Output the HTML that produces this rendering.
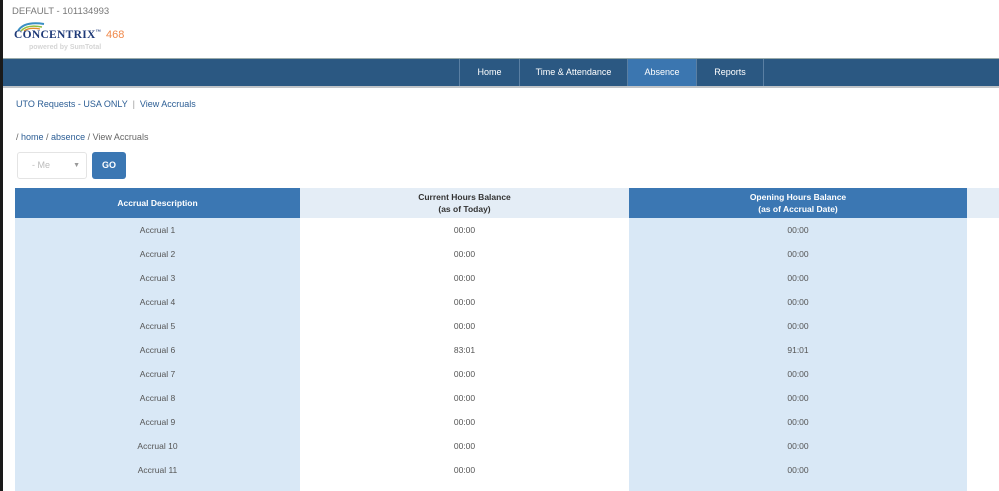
<!DOCTYPE html>
<html style="width:999px;height:491px;overflow:hidden"><head><meta charset="utf-8"><style>
*{margin:0;padding:0;box-sizing:border-box}
body{width:999px;height:491px;overflow:hidden;background:#fff;font-family:"Liberation Sans",sans-serif;position:relative;color:#555}
.strip{position:absolute;left:0;top:0;width:3px;height:491px;background:#1a1a1a}
.abs{position:absolute}
.nav{left:3px;top:58px;width:996px;height:30px;background:#2b5882;border-top:1px solid #9aa;border-bottom:2px solid #c0c4c8}
.ni{position:absolute;top:0;height:27px;line-height:27px;color:#fff;font-size:9px;text-align:center;border-left:1px solid #5a7fa3}
table{position:absolute;left:15px;top:188px;border-collapse:collapse;font-size:8.5px}
td,th{text-align:center;height:24px;color:#555;font-weight:normal}
th{height:30px;font-weight:bold;color:#333;line-height:12px}
.c1{width:285px;background:#d9e8f6}
.c2{width:329px;background:#fff}
.c3{width:338px;background:#d9e8f6}
.c4{width:32px;background:#fff}
th.c1,th.c3{background:#3b77b3;color:#fff}
th.c2,th.c4{background:#e4edf6}
a{color:#2b5d94;text-decoration:none}
</style></head><body>
<div class="strip"></div>
<div class="abs" style="left:12px;top:6px;font-size:9.5px;color:#777">DEFAULT - 101134993</div>
<svg class="abs" style="left:16px;top:20px" width="30" height="12"><path d="M2 11 Q8 1 28 4" stroke="#3a8fc4" stroke-width="2" fill="none"/><path d="M5 11 Q11 4 26 7" stroke="#8fbf3f" stroke-width="1.5" fill="none"/><path d="M8 11 Q13 7 24 9" stroke="#e08a2a" stroke-width="1.3" fill="none"/></svg>
<div class="abs" style="left:14px;top:29px;font-family:'Liberation Serif',serif;font-weight:bold;font-size:11.5px;color:#1f3a78;letter-spacing:0.3px">CONCENTRIX<sup style="font-size:5px">™</sup></div>
<div class="abs" style="left:106px;top:29px;font-size:11px;color:#f0884a">468</div>
<div class="abs" style="left:29px;top:44px;font-size:7px;font-weight:bold;color:#d5d5d5">powered by SumTotal</div>
<div class="abs nav">
<div class="ni" style="left:456px;width:60px">Home</div>
<div class="ni" style="left:516px;width:108px">Time &amp; Attendance</div>
<div class="ni" style="left:624px;width:69px;background:#3b76b0">Absence</div>
<div class="ni" style="left:693px;width:67px">Reports</div>
<div class="ni" style="left:760px;width:1px"></div>
</div>
<div class="abs" style="left:16px;top:99px;font-size:9px"><a>UTO Requests - USA ONLY</a> <span style="color:#999">&nbsp;|&nbsp;</span> <a>View Accruals</a></div>
<div class="abs" style="left:16px;top:132px;font-size:9px;color:#666">/ <a>home</a> / <a>absence</a> / View Accruals</div>
<div class="abs" style="left:17px;top:152px;width:70px;height:27px;border:1px solid #e4e4e4;border-radius:3px;font-size:9px;color:#bbb;line-height:25px;padding-left:14px">- Me<span style="position:absolute;right:6px;top:0;font-size:7px;color:#999">▼</span></div>
<div class="abs" style="left:92px;top:152px;width:34px;height:27px;background:#3b77b3;border-radius:3px;color:#fff;font-weight:bold;font-size:9px;text-align:center;line-height:27px">GO</div>
<table>
<tr><th class="c1">Accrual Description</th><th class="c2">Current Hours Balance<br>(as of Today)</th><th class="c3">Opening Hours Balance<br>(as of Accrual Date)</th><th class="c4"></th></tr>
<tr><td class="c1">Accrual 1</td><td class="c2">00:00</td><td class="c3">00:00</td><td class="c4"></td></tr>
<tr><td class="c1">Accrual 2</td><td class="c2">00:00</td><td class="c3">00:00</td><td class="c4"></td></tr>
<tr><td class="c1">Accrual 3</td><td class="c2">00:00</td><td class="c3">00:00</td><td class="c4"></td></tr>
<tr><td class="c1">Accrual 4</td><td class="c2">00:00</td><td class="c3">00:00</td><td class="c4"></td></tr>
<tr><td class="c1">Accrual 5</td><td class="c2">00:00</td><td class="c3">00:00</td><td class="c4"></td></tr>
<tr><td class="c1">Accrual 6</td><td class="c2">83:01</td><td class="c3">91:01</td><td class="c4"></td></tr>
<tr><td class="c1">Accrual 7</td><td class="c2">00:00</td><td class="c3">00:00</td><td class="c4"></td></tr>
<tr><td class="c1">Accrual 8</td><td class="c2">00:00</td><td class="c3">00:00</td><td class="c4"></td></tr>
<tr><td class="c1">Accrual 9</td><td class="c2">00:00</td><td class="c3">00:00</td><td class="c4"></td></tr>
<tr><td class="c1">Accrual 10</td><td class="c2">00:00</td><td class="c3">00:00</td><td class="c4"></td></tr>
<tr><td class="c1">Accrual 11</td><td class="c2">00:00</td><td class="c3">00:00</td><td class="c4"></td></tr>
<tr><td class="c1">Accrual 12</td><td class="c2">00:00</td><td class="c3">00:00</td><td class="c4"></td></tr>
</table>
</body></html>
